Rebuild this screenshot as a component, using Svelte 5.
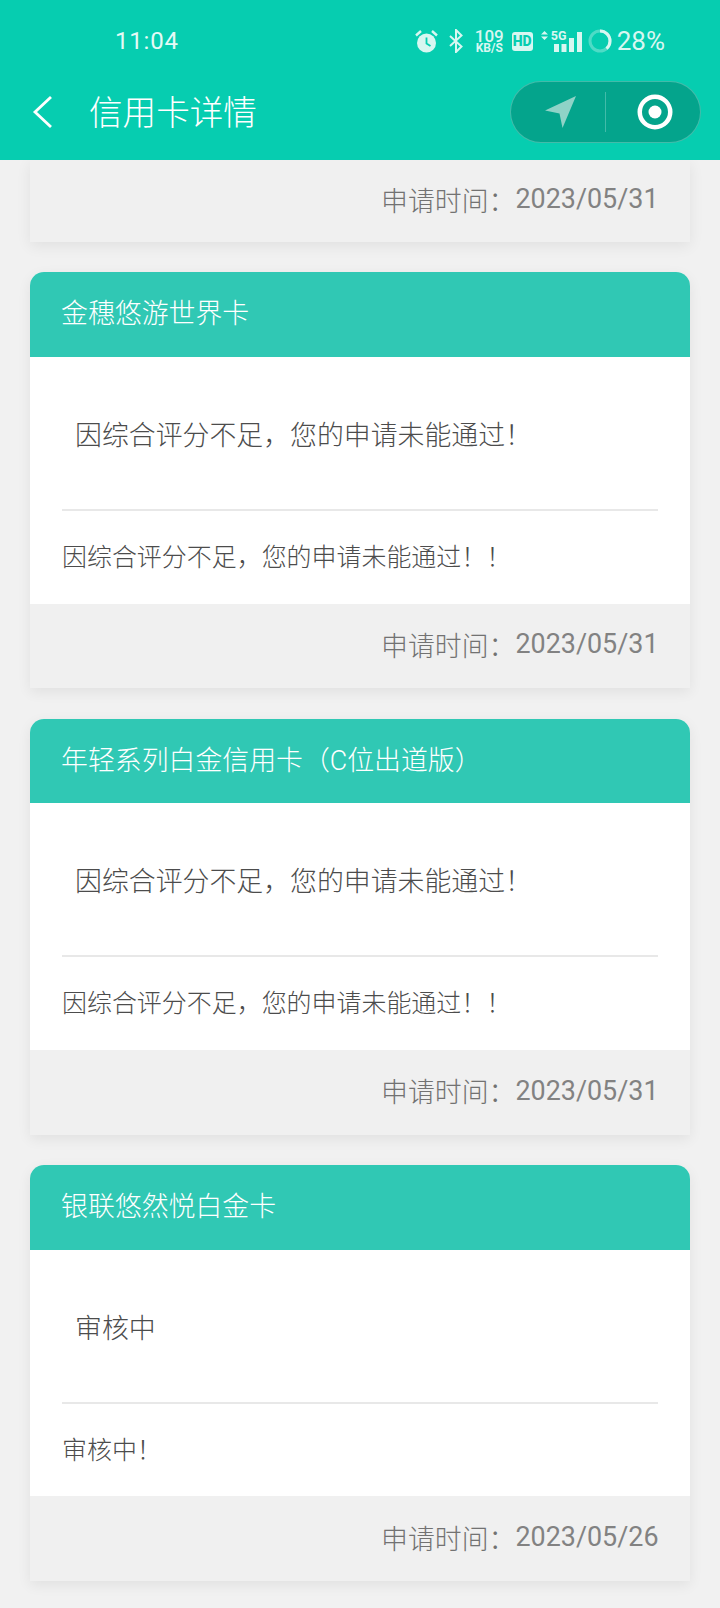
<script>
  const cards = [
    { title: '金穗悠游世界卡', status: '因综合评分不足，您的申请未能通过！', note: '因综合评分不足，您的申请未能通过！！', date: '2023/05/31' },
    { title: '年轻系列白金信用卡（C位出道版）', status: '因综合评分不足，您的申请未能通过！', note: '因综合评分不足，您的申请未能通过！！', date: '2023/05/31' },
    { title: '银联悠然悦白金卡', status: '审核中', note: '审核中！', date: '2023/05/26' }
  ];
</script>

<div class="page">
  <header class="top">
    <div class="status">
      <span class="time">11:04</span>
      <div class="sys">
        <svg width="23" height="24" viewBox="0 0 23 24">
          <circle cx="11.500" cy="14" r="9.500" fill="#d8f7f1"/>
          <path d="M11.500 8.500V14.500l4 2.500" fill="none" stroke="#06cdb0" stroke-width="1.800"/>
          <path d="M1 6.500 6 2M22 6.500 17 2" stroke="#d8f7f1" stroke-width="2.400" fill="none"/>
        </svg>
        <svg class="ic-bt" width="14" height="24" viewBox="0 0 14 24">
          <path d="M1 7l11.500 10.500L7 23V1l5.500 5.500L1 17" fill="none" stroke="#d8f7f1" stroke-width="2"/>
        </svg>
        <div class="speed"><b>109</b><i>KB/S</i></div>
        <span class="hd">HD</span>
        <div class="net">
          <svg class="arrows" width="7" height="9" viewBox="0 0 7 9"><path d="M3.500 0 7 3.500H0zM3.500 9 0 5.500h7z" fill="#d8f7f1"/></svg>
          <span class="fiveg">5G</span>
          <svg class="bars" width="28" height="20" viewBox="0 0 28 20">
            <rect x="0" y="12" width="5" height="8" fill="#d8f7f1"/>
            <rect x="7.500" y="12" width="5" height="8" fill="#d8f7f1"/>
            <rect x="15" y="6" width="5" height="14" fill="#d8f7f1"/>
            <rect x="23" y="0" width="5" height="20" fill="#d8f7f1"/>
          </svg>
        </div>
        <svg class="ic-batt" width="24" height="24" viewBox="0 0 24 24">
          <circle cx="12" cy="12" r="10" fill="none" stroke="#d8f7f1" stroke-opacity=".35" stroke-width="3"/>
          <path d="M12 2a10 10 0 0 1 10 10 10 10 0 0 1-3.500 7.600" fill="none" stroke="#d8f7f1" stroke-width="3"/>
        </svg>
        <span class="pct">28%</span>
      </div>
    </div>
    <nav class="bar">
      <svg class="back" width="22" height="36" viewBox="0 0 22 36">
        <path d="M20 3 4 18l16 15" fill="none" stroke="#fff" stroke-width="2.800"/>
      </svg>
      <h1>信用卡详情</h1>
      <div class="capsule">
        <svg width="34" height="34" viewBox="0 0 34 34">
          <path d="M32 1 1 15.500 15.500 18.500 18.500 33z" fill="#8fd3c7"/>
        </svg>
        <span class="sep"></span>
        <svg class="target" width="36" height="36" viewBox="0 0 36 36">
          <circle cx="18" cy="18" r="15.250" fill="none" stroke="#fff" stroke-width="4.500"/>
          <circle cx="18" cy="18" r="6.500" fill="#fff"/>
        </svg>
      </div>
    </nav>
  </header>

  <main class="list">
    <section class="card">
      <div class="foot first">申请时间：<span>2023/05/31</span></div>
    </section>
    {#each cards as c}
      <section class="card">
        <div class="head">{c.title}</div>
        <div class="body">
          <p class="state">{c.status}</p>
          <p class="note">{c.note}</p>
        </div>
        <div class="foot">申请时间：<span>{c.date}</span></div>
      </section>
    {/each}
  </main>
</div>

<style>
  :global(body) {
    margin: 0;
    background: #f1f1f1;
  }
  .page {
    width: 720px;
    height: 1608px;
    overflow: hidden;
    background: #f1f1f1;
    font-family: Roboto, "Noto Sans CJK SC", sans-serif;
  }
  .top {
    height: 160px;
    background: #06cdb0;
    color: #fff;
    position: relative;
    z-index: 1;
  }
  .status {
    height: 72px;
    box-sizing: border-box;
    padding: 10px 55px 0 115px;
    display: flex;
    align-items: center;
    justify-content: space-between;
    color: #d8f7f1;
  }
  .time {
    font-size: 24px;
    font-weight: 400;
    letter-spacing: 0.8px;
    color: #e4faf6;
  }
  .sys {
    display: flex;
    align-items: center;
  }
  .ic-bt {
    margin-left: 11px;
  }
  .speed {
    display: flex;
    flex-direction: column;
    align-items: center;
    margin-left: 12px;
    width: 29px;
    line-height: 1;
  }
  .speed b {
    font-size: 17px;
    font-weight: 500;
    height: 14px;
    line-height: 14px;
  }
  .speed i {
    font-style: normal;
    font-size: 12px;
    font-weight: 700;
    height: 10px;
    line-height: 10px;
    white-space: nowrap;
  }
  .hd {
    margin-left: 8px;
    width: 21px;
    height: 19px;
    border-radius: 3px;
    background: #d8f7f1;
    color: #06cdb0;
    font-size: 14px;
    font-weight: 900;
    line-height: 19px;
    text-align: center;
  }
  .net {
    position: relative;
    width: 41px;
    height: 24px;
    margin-left: 8px;
  }
  .arrows {
    position: absolute;
    left: 0;
    top: 2px;
  }
  .fiveg {
    position: absolute;
    left: 10px;
    top: 0;
    font-size: 12.500px;
    font-weight: 700;
    line-height: 13px;
  }
  .bars {
    position: absolute;
    right: 0;
    top: 3px;
  }
  .ic-batt {
    margin-left: 6px;
  }
  .pct {
    margin-left: 5px;
    font-size: 26px;
    line-height: 28px;
  }
  .bar {
    height: 80px;
    display: flex;
    align-items: center;
    padding: 0 19px 0 31px;
  }
  .bar h1 {
    margin: 0 0 0 36px;
    padding-top: 4px;
    font-size: 33.600px;
    font-weight: 300;
    line-height: 48px;
    flex: 1;
  }
  .capsule {
    width: 191px;
    height: 62px;
    box-sizing: border-box;
    border: 1px solid rgba(255, 255, 255, 0.25);
    border-radius: 31px;
    background: rgba(0, 0, 0, 0.2);
    display: flex;
    align-items: center;
    padding-left: 33px;
  }
  .sep {
    width: 1px;
    height: 40px;
    margin-left: 27px;
    background: rgba(255, 255, 255, 0.25);
  }
  .target {
    margin-left: 31px;
  }
  .list {
    display: flex;
    flex-direction: column;
    gap: 30.720px;
    padding: 0 30px;
  }
  .card {
    border-radius: 14px 14px 0 0;
    box-shadow: 0 4px 14px rgba(0, 0, 0, 0.07);
    background: #fff;
    overflow: hidden;
  }
  .card:first-child {
    border-radius: 0;
  }
  .head {
    height: 84.500px;
    padding-left: 31px;
    background: #30c8b4;
    color: #fff;
    font-size: 26.880px;
    font-weight: 300;
    line-height: 84px;
  }
  .body {
    height: 246.600px;
    box-sizing: border-box;
    padding: 0 32px;
    display: flex;
    flex-direction: column;
  }
  .state {
    margin: 0;
    height: 154px;
    box-sizing: border-box;
    padding: 59px 0 0 13px;
    border-bottom: 2px solid #e8e8e8;
    color: #4c4c4c;
    font-size: 26.880px;
    font-weight: 300;
    line-height: 40px;
  }
  .note {
    margin: 0;
    padding-top: 28px;
    color: #4c4c4c;
    font-size: 24.960px;
    font-weight: 300;
    line-height: 38px;
  }
  .foot {
    height: 84.600px;
    box-sizing: border-box;
    padding: 0 31.500px 3px 0;
    display: flex;
    align-items: center;
    justify-content: flex-end;
    background: #f0f0f0;
    color: #727272;
    font-size: 26.880px;
    font-weight: 300;
  }
  .foot span {
    font-weight: 400;
    color: #828282;
  }
  .foot.first {
    height: 81.700px;
  }
</style>
